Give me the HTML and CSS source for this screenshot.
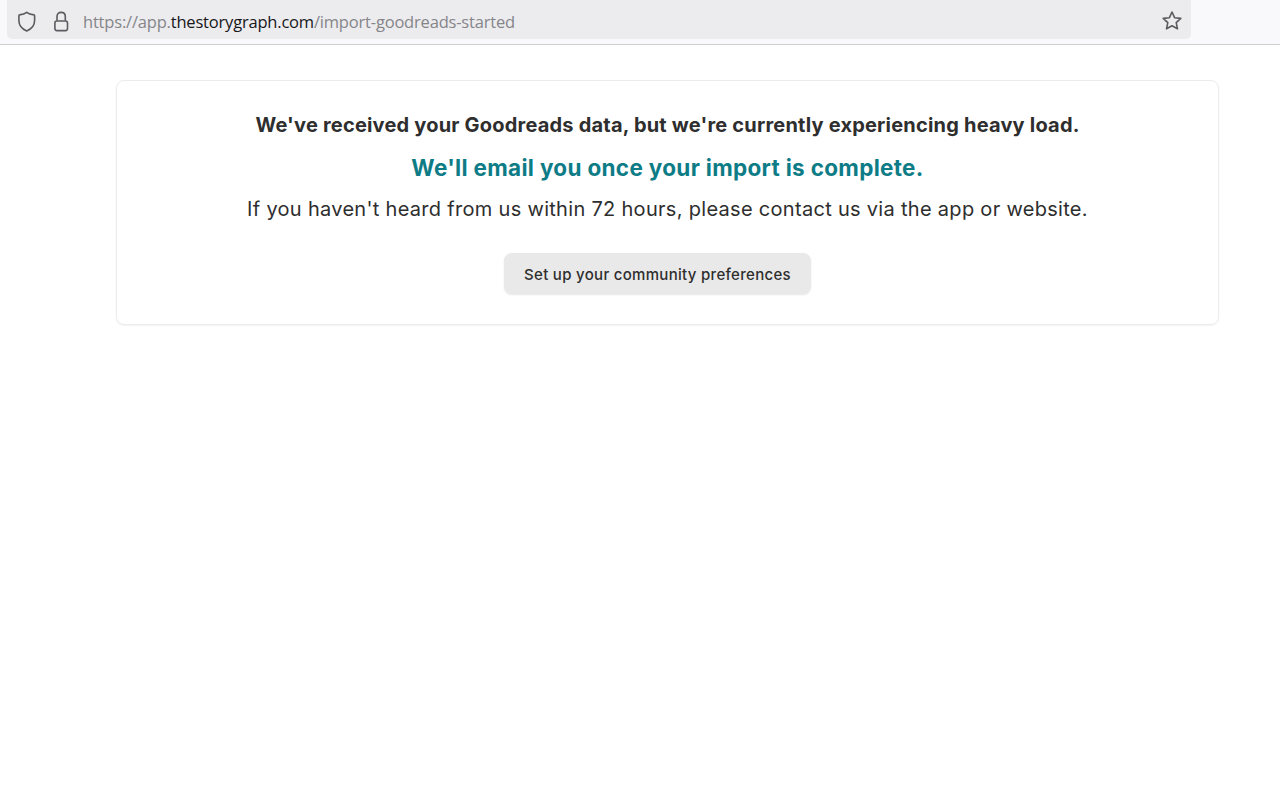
FILE: index.html
```html
<!DOCTYPE html>
<html lang="en">
<head>
<meta charset="utf-8">
<title>The StoryGraph</title>
<link rel="stylesheet" href="styles.css">
</head>
<body>
<header class="toolbar">
  <div class="urlbar">
    <svg class="icon shield" width="20" height="22" viewBox="0 -1 20 22"><path d="M8.7 1.4 C10.5 2.9 13 3.6 16 3.9 C16.6 3.9 16.6 4.4 16.6 5 V9.5 C16.6 14.4 13.6 17.9 8.7 20 C3.8 17.9 0.9 14.4 0.9 9.5 V5 C0.9 4.4 0.9 3.9 1.5 3.9 C4.4 3.6 6.9 2.9 8.7 1.4 Z"/></svg>
    <svg class="icon lock" width="18" height="22" viewBox="0 -1 18 22"><path d="M3 9.8 V5.6 C3 2.9 4.6 1.4 7.1 1.4 C9.6 1.4 11.3 2.9 11.3 5.6 V9.8"/><rect x="0.9" y="10" width="12.6" height="9.6" rx="2"/></svg>
    <div class="url"><span class="dim">https://app.</span>thestorygraph.com<span class="dim">/import-goodreads-started</span></div>
    <svg class="icon star" width="22" height="22" viewBox="0 0 22 22"><path d="M11 2 L13.6 7.7 L19.8 8.4 L15.2 12.6 L16.5 18.8 L11 15.7 L5.5 18.8 L6.8 12.6 L2.2 8.4 L8.4 7.7 Z"/></svg>
  </div>
</header>
<main class="page">
  <section class="card">
    <p class="lead">We've received your Goodreads data, but we're currently experiencing heavy load.</p>
    <p class="accent">We'll email you once your import is complete.</p>
    <p class="note">If you haven't heard from us within 72 hours, please contact us via the app or website.</p>
    <a class="button" href="#">Set up your community preferences</a>
  </section>
</main>
</body>
</html>
```
FILE: styles.css
```css
* { box-sizing: border-box; }
html, body { margin: 0; height: 100%; background: #fff; overflow: hidden; }
body { font-family: Inter, "Liberation Sans", sans-serif; color: #2e2e2e; }
.toolbar { height: 45px; background: #f9f9fb; border-bottom: 1px solid #cfcfd2; padding: 0 89px 0 7px; }
.urlbar { height: 39px; background: #ececee; border-radius: 0 0 5px 5px; display: flex; align-items: center; padding: 2px 8px 0 11px; }
.icon { flex: none; fill: none; stroke: #5b5b61; stroke-width: 1.6; stroke-linejoin: round; }
.lock { margin-left: 16px; }
.url { flex: 1; margin-left: 11px; font: 16.5px/22px "Open Sans", sans-serif; letter-spacing: -0.19px; color: #17171a; padding-top: 2px; }
.dim { color: #85858a; }
.page { padding: 35px 61px 0 116px; }
.card { height: 245px; border: 1px solid #ececec; border-radius: 8px; box-shadow: 0 1px 2px rgba(0,0,0,.05); padding: 30px 0 0; display: flex; flex-direction: column; align-items: center; }
.card p { margin: 0; white-space: nowrap; }
.lead { font-size: 20px; line-height: 28px; font-weight: 700; letter-spacing: 0.2px; }
.accent { font-size: 22.5px; line-height: 32px; font-weight: 700; letter-spacing: 0.31px; color: #0e7c86; margin-top: 13px !important; }
.note { font-size: 20px; line-height: 28px; font-weight: 400; letter-spacing: 0.3px; margin-top: 11px !important; }
.button { margin: 30px 20px 0 0; height: 41px; width: 307px; padding-top: 2px; background: #e9e9e9; border-radius: 8px; box-shadow: 0 1px 2px rgba(0,0,0,.1); display: flex; align-items: center; justify-content: center; font-size: 15px; font-weight: 500; letter-spacing: 0.3px; color: #2e2e2e; text-decoration: none; }
```
